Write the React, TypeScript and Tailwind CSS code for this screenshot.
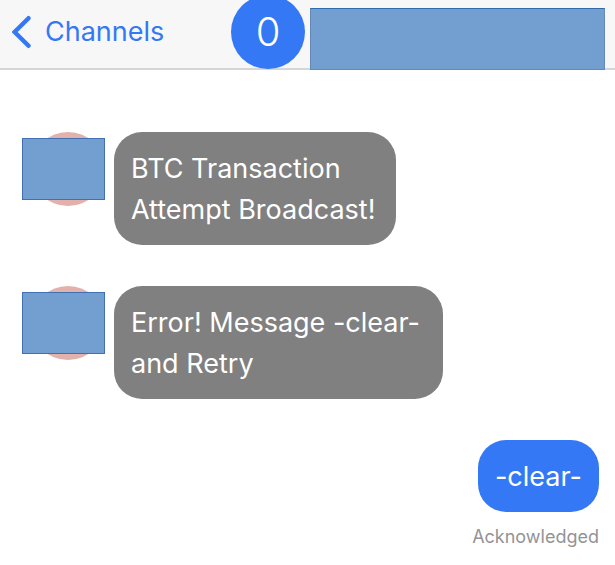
import React from 'react';

type Incoming = { id: string; lines: string[]; width: string };

const incoming: Incoming[] = [
  { id: 'btc', lines: ['BTC Transaction', 'Attempt Broadcast!'], width: 'w-[282px]' },
  { id: 'error', lines: ['Error! Message -clear-', 'and Retry'], width: 'w-[329px]' },
];

function Avatar() {
  return (
    <div className="relative h-[74px] w-[83px] shrink-0">
      <div className="ml-[9px] h-[74px] w-[74px] rounded-full bg-[#e2b1ac]" />
      <div className="absolute left-0 top-[6px] h-[62px] w-[83px] border border-[#4070b0] bg-[#729fd0]" />
    </div>
  );
}

export default function App() {
  return (
    <div className="min-h-screen bg-white font-[Inter,'Liberation_Sans',sans-serif]">
      <header className="flex h-[70px] items-start border-b-2 border-[#d6d6d7] bg-[#f7f7f7]">
        <button type="button" className="flex h-16 w-[231px] items-center gap-[13px] pl-3 text-[27px] text-[#3478f6]">
          <svg width="20" height="34" viewBox="0 0 20 34" fill="none" stroke="currentColor" strokeWidth="4.4" strokeLinecap="round" strokeLinejoin="miter" aria-hidden="true">
            <path d="M16.5 3.2 2.6 17l13.9 13.8" />
          </svg>
          Channels
        </button>
        <div className="-mt-[5px] flex h-[74px] w-[74px] shrink-0 items-center justify-center rounded-full bg-[#3478f6] text-[40px] font-light text-white">
          0
        </div>
        <div className="ml-[5px] mr-[10px] mt-2 h-[62px] flex-1 border border-[#6389bb] border-t-[#2f6aad] bg-[#729fd0]" />
      </header>
      <main className="flex flex-col gap-[41px] px-4 pt-[62px]">
        {incoming.map((m) => (
          <div key={m.id} className="flex items-start gap-[9px] pl-[6px]">
            <Avatar />
            <p className={`${m.width} rounded-[28px] bg-[#808080] px-[17px] pb-[15px] pt-4 text-[27px] leading-[41px] text-white`}>
              {m.lines.map((l) => (
                <span key={l} className="block whitespace-nowrap">{l}</span>
              ))}
            </p>
          </div>
        ))}
        <div className="flex flex-col items-end gap-[11px]">
          <p className="rounded-[28px] bg-[#3478f6] px-[17px] pb-[15px] pt-4 text-[27px] leading-[41px] text-white">-clear-</p>
          <p className="text-lg text-[#939396]">Acknowledged</p>
        </div>
      </main>
    </div>
  );
}
